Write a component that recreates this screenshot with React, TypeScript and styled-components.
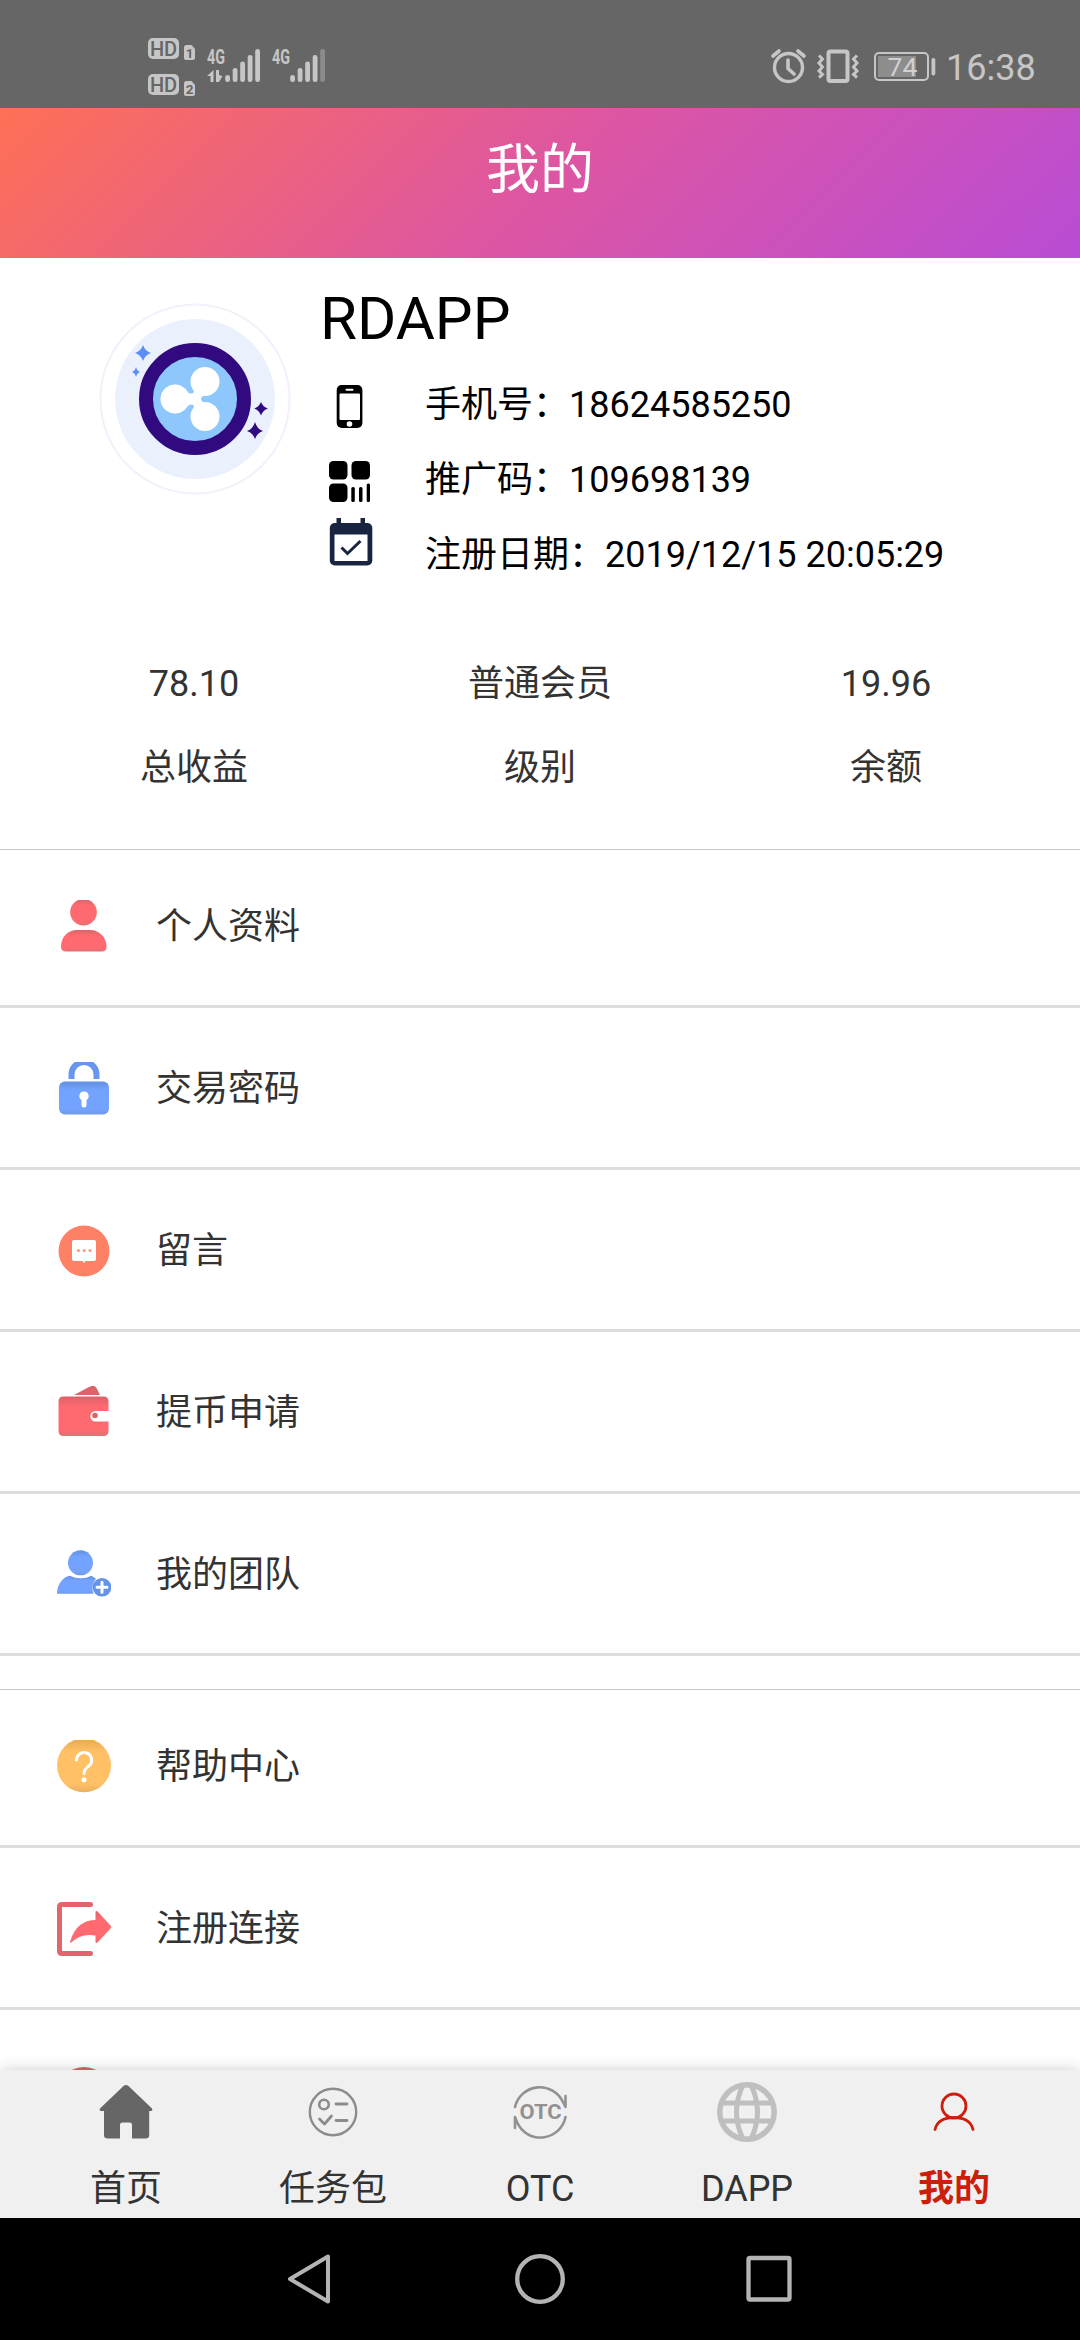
import React from "react";
import styled, { createGlobalStyle } from "styled-components";

const GlobalStyle = createGlobalStyle`
  * { box-sizing: border-box; }
  body {
    margin: 0;
    background: #fff;
    font-family: Roboto, "Noto Sans CJK SC", sans-serif;
    font-size: 36px;
    color: #333;
  }
  svg { display: block; flex: none; }
`;

const Screen = styled.div`
  display: flex;
  flex-direction: column;
  width: 1080px;
  height: 2340px;
  overflow: hidden;
`;

const StatusBar = styled.div`
  display: flex;
  justify-content: space-between;
  flex: none;
  height: 108px;
  padding: 0 44px 0 144px;
  background: #666;
`;

const StatusGroup = styled.div`
  display: flex;
`;

const Clock = styled.span`
  width: 90px;
  line-height: 136px;
  white-space: nowrap;
  color: #c6c6c6;
`;

const Header = styled.header`
  flex: none;
  height: 150px;
  line-height: 126px;
  text-align: center;
  font-size: 54px;
  color: #fff;
  background: linear-gradient(135deg, #fe7055 0%, #dd56a2 50%, #b94cd5 100%);
`;

const Content = styled.main`
  flex: 1;
  min-height: 0;
  overflow: hidden;
`;

const Profile = styled.section`
  display: flex;
  padding: 11px 0 0 98px;
  color: #000;
`;

const AvatarBox = styled.div`
  padding-top: 33px;
  margin-right: 34px;
`;

const Details = styled.div`
  display: flex;
  flex-direction: column;
`;

const Name = styled.h1`
  height: 98px;
  margin: 0 0 0 -6px;
  font-size: 60px;
  font-weight: 400;
  line-height: 100px;
`;

const DetailRow = styled.div`
  display: flex;
  gap: 51px;
  height: 75px;
  line-height: 77px;
  white-space: nowrap;
`;

const Stats = styled.section`
  display: grid;
  grid-template-columns: repeat(3, 1fr);
  padding: 50px 21px 39px;
  text-align: center;
`;

const Stat = styled.div`
  display: flex;
  flex-direction: column;
  line-height: 84px;
`;

const Menu = styled.ul`
  margin: 0 0 33px;
  padding: 0;
  list-style: none;
  border-top: 1px solid #c8c8c8;
`;

const MenuItem = styled.li`
  display: flex;
  gap: 45px;
  height: 162px;
  padding: 54px 57px 0;
  border-bottom: 3px solid #ddd;

  &:first-child {
    height: 158px;
    padding-top: 50px;
  }
`;

const MenuLabel = styled.span`
  line-height: 55px;
`;

const TabBar = styled.nav`
  display: flex;
  flex: none;
  position: relative;
  height: 148px;
  padding: 12px 22.5px 0;
  background: #f0f0f0;
  box-shadow: 0 0 15px -1px rgba(0, 0, 0, 0.22);
`;

const Tab = styled.div<{ $active?: boolean }>`
  display: flex;
  flex: 1;
  flex-direction: column;
  align-items: center;
  gap: 26px;
  line-height: 42px;
  color: ${(p) => (p.$active ? "#cd1e0c" : "#333")};
  font-weight: ${(p) => (p.$active ? 700 : 400)};
`;

const SystemNav = styled.div`
  display: flex;
  flex: none;
  justify-content: space-between;
  height: 122px;
  padding: 0 280px 0 280px;
  background: #000;
`;

const LIGHT = "#c6c6c6";

const HdIndicators = () => (
  <svg width="60" height="108" viewBox="144 0 60 108">
    {[0, 36].map((dy, i) => (
      <g key={dy} transform={`translate(0 ${dy})`}>
        <rect x="148" y="38" width="31" height="21" rx="5" fill={LIGHT} />
        <text x="163.5" y="55.5" textAnchor="middle" fontFamily="Roboto" fontWeight="500" fontSize="20" fill="#666">HD</text>
        <path d="M184 47.500q0-2.500 2.500-2.500h5l3.500 4v9q0 2-2 2h-7q-2 0-2-2z" fill={LIGHT} />
        <text x="189.500" y="57.500" textAnchor="middle" fontFamily="Roboto" fontWeight="700" fontSize="13.500" fill="#666">{i + 1}</text>
      </g>
    ))}
  </svg>
);

const Signal = ({ x, left, width, weak }: { x: number; left: number; width: number; weak?: boolean }) => (
  <svg width={width} height="108" viewBox={`${left} 0 ${width} 108`}>
    <text x={x} y="64" textLength="18" lengthAdjust="spacingAndGlyphs" fontFamily="Roboto" fontWeight="700" fontSize="21" fill={LIGHT}>4G</text>
    {!weak && (
      <path d="M213.500 70v12h-3V76h-3.500zM216 70h3v5l3.500 1-3.500 6h-3z" fill={LIGHT} />
    )}
    {[75, 68, 61.5, 55, 49].map((y, i) => (
      <rect key={y} x={x + 18.200 + i * 7.5} y={y} width="4.800" height={82 - y} rx="2.300" fill={weak && i === 4 ? "#8b8b8b" : LIGHT} />
    ))}
  </svg>
);

const StatusIcons = () => (
  <svg width="182" height="108" viewBox="764 0 182 108" fill="none" stroke={LIGHT} strokeWidth="3.400">
    <circle cx="788.500" cy="67.500" r="14" />
    <path d="M788 60v8.500l6 5.500M773 56l6-5M804 56l-6-5" strokeWidth="3.600" strokeLinecap="round" />
    <rect x="828.500" y="51.500" width="19" height="29.500" rx="2" strokeWidth="4" />
    <path d="M819 55.500l3.500 3.500-3.500 4 3.500 4-3.500 4 3.500 3.500-3.500 3M857 55.500l-3.500 3.500 3.500 4-3.500 4 3.500 4-3.500 3.500 3.500 3" strokeWidth="3" />
    <rect x="875" y="53" width="53" height="27" rx="4" strokeWidth="2" />
    <rect x="878" y="56" width="38" height="21" fill="#8d8d8d" stroke="none" />
    <rect x="931.500" y="58" width="3.800" height="17.500" rx="1.800" fill={LIGHT} stroke="none" />
    <text x="902.500" y="76" textAnchor="middle" fontFamily="Roboto" fontSize="26.500" fill="#d0d0d0" stroke="none">74</text>
  </svg>
);

const Avatar = () => (
  <svg width="194" height="194" viewBox="-97 -97 194 194">
    <circle r="94.500" fill="#fff" stroke="#eff2fb" strokeWidth="2" />
    <circle r="80" fill="#ebf1fc" />
    <circle r="49" fill="#8dc7fb" stroke="#310a80" strokeWidth="14" />
    <g fill="#fff">
      <circle cx="-20" cy="0" r="14.500" />
      <circle cx="10" cy="-17.500" r="14.500" />
      <circle cx="10" cy="17.500" r="14.500" />
      <path d="M-10-9Q-5-4-2-6Q0-7-2-11L13-5Q6-3 6 0Q6 3 13 5L-2 11Q0 7-2 6Q-5 4-10 9z" />
    </g>
    <path d="M-52-54q2 6 8 8q-6 2-8 8q-2-6-8-8q6-2 8-8zM-59-32q1 4 4 5q-3 1-4 5q-1-4-4-5q3-1 4-5z" fill="#5c8df5" />
    <path d="M66 3q2 5 7 6.500q-5 1.500-7 7q-2-5.500-7-7q5-1.500 7-6.500zM60 23q2 7 8 9q-6 2-8 8q-2-6-8-8q6-2 8-9z" fill="#310a80" />
  </svg>
);

const PhoneIcon = () => (
  <svg width="48" height="75" viewBox="326 367 48 75">
    <rect x="336.700" y="385" width="25.700" height="43" rx="5" fill="#000" />
    <rect x="339.500" y="393.500" width="20.500" height="26.500" rx="1" fill="#fff" />
    <rect x="345.500" y="388.800" width="8" height="2" rx="1" fill="#fff" />
    <circle cx="349.500" cy="424" r="2.800" fill="#fff" />
  </svg>
);

const CodeIcon = () => (
  <svg width="48" height="75" viewBox="326 442 48 75">
    <rect x="329" y="461" width="18.500" height="18.500" rx="4.500" />
    <rect x="351.500" y="461" width="18.500" height="18.500" rx="4.500" />
    <rect x="329" y="483.500" width="18.500" height="18.500" rx="4.500" />
    <rect x="351.300" y="487" width="3.500" height="15" rx="1.500" />
    <rect x="359" y="487" width="3.500" height="15" rx="1.500" />
    <rect x="366.700" y="483.500" width="3.300" height="18.500" rx="1.500" />
  </svg>
);

const CalendarIcon = () => (
  <svg width="48" height="75" viewBox="326 517 48 75">
    <rect x="329.800" y="523" width="42.500" height="42.500" rx="5" fill="#182440" />
    <path d="M336.500 518h4.500v6h-4.500zM360.500 518h4.500v6h-4.500z" fill="#182440" />
    <rect x="334.500" y="534.500" width="33" height="26.500" fill="#fff" />
    <path d="M341.500 547.500l6 6L360.500 541" fill="none" stroke="#182440" strokeWidth="3" />
  </svg>
);

const details = [
  { icon: <PhoneIcon />, text: "手机号：18624585250" },
  { icon: <CodeIcon />, text: "推广码：109698139" },
  { icon: <CalendarIcon />, text: "注册日期：2019/12/15 20:05:29" },
];

const stats = [
  ["78.10", "总收益"],
  ["普通会员", "级别"],
  ["19.96", "余额"],
];

const MenuSvg = ({ children }: { children: React.ReactNode }) => (
  <svg width="54" height="54" viewBox="0 0 54 54">{children}</svg>
);

const GradientDefs = styled.svg`
  position: absolute;
`;

const Defs = () => (
  <GradientDefs width="0" height="0">
    <defs>
      {[
        ["red", "#ff6a70", "#da6268"],
        ["blue", "#73a3ff", "#608ee0"],
        ["gold", "#ffc066", "#e5a850"],
      ].map(([id, main, edge]) => (
        <linearGradient key={id} id={id} x1="0" y1="0" x2="0" y2="1">
          <stop offset="0" stopColor={edge} />
          <stop offset="0.250" stopColor={main} />
          <stop offset="0.850" stopColor={main} />
          <stop offset="1" stopColor={edge} stopOpacity="0.900" />
        </linearGradient>
      ))}
    </defs>
  </GradientDefs>
);

const UserIcon = () => (
  <MenuSvg>
    <circle cx="26.500" cy="12.200" r="13.300" fill="url(#red)" />
    <path d="M4 46.500C4 37 11 30 20 30h13c9 0 16.500 7 16.500 16.500Q49.500 51.500 45 51.500H9Q4 51.500 4 46.500z" fill="url(#red)" />
  </MenuSvg>
);

const LockIcon = () => (
  <MenuSvg>
    <path d="M14.500 17V12.500a12.500 12.500 0 0 1 25 0V17" fill="none" stroke="#6896ee" strokeWidth="6" />
    <rect x="2" y="19.500" width="50" height="33" rx="6" fill="url(#blue)" />
    <path d="M27 29.500a4.600 4.600 0 0 0-2.500 8.500v5a2.500 2.500 0 0 0 5 0v-5a4.600 4.600 0 0 0-2.500-8.500z" fill="#fff" />
  </MenuSvg>
);

const MessageIcon = () => (
  <MenuSvg>
    <circle cx="27" cy="27" r="25.500" fill="#ff8165" />
    <path d="M17 16h20q2 0 2 2v17q0 2-2 2h-8.500q-1 2-1.500 2t-1.500-2H17q-2 0-2-2V18q0-2 2-2z" fill="#fff" />
    <g fill="#ff9a84">
      <circle cx="21.500" cy="26.500" r="1.600" />
      <circle cx="27.200" cy="26.500" r="1.600" />
      <circle cx="33" cy="26.500" r="1.600" />
    </g>
  </MenuSvg>
);

const WalletIcon = () => (
  <MenuSvg>
    <path d="M17 9L32 1q6-3 8 2l3 6z" fill="#dc6369" />
    <path d="M6.500 10.500h40q5 0 5 5v9.500H38.500a5.200 5.200 0 0 0 0 10.400H51.500V45q0 5-5 5h-40q-5 0-5-5V15.500q0-5 5-5z" fill="url(#red)" />
    <circle cx="38" cy="29.500" r="2.800" fill="#de6369" />
  </MenuSvg>
);

const TeamIcon = () => (
  <MenuSvg>
    <g transform="translate(0 -1.700)">
      <circle cx="23.500" cy="16.500" r="12.500" fill="url(#blue)" />
      <path d="M0 47.500C0 37 7 30.500 12.500 29.500Q24 34.500 34.500 29.500L39 32.500Q33.500 39.500 36.500 47.500z" fill="url(#blue)" />
      <circle cx="45" cy="41" r="9.300" fill="#6593ea" />
      <path d="M45 36v10M40 41h10" stroke="#fff" strokeWidth="3" strokeLinecap="round" />
    </g>
  </MenuSvg>
);

const HelpIcon = () => (
  <MenuSvg>
    <circle cx="27" cy="25.300" r="27" fill="url(#gold)" />
    <path d="M19.500 20a7.600 7.600 0 1 1 13 5.500q-5.500 3.500-5.500 8" fill="none" stroke="#fff" strokeWidth="3" strokeLinecap="round" />
    <circle cx="27" cy="39.700" r="2.500" fill="#fff" />
  </MenuSvg>
);

const ShareIcon = () => (
  <MenuSvg>
    <path d="M33.500 2.500H5q-2.500 0-2.500 2.500v44q0 2.500 2.500 2.500h28.500" fill="none" stroke="#e2656d" strokeWidth="5" strokeLinecap="round" />
    <path d="M38.500 10Q39 8 41 10l12.500 13.500q1 1.500 0 3L41 40q-2 2-2.500 0v-6.500Q24 31 15 40q-3 2-1.500-1.500Q20 18 38.500 18z" fill="url(#red)" />
  </MenuSvg>
);

const RoundIcon = () => (
  <MenuSvg>
    <circle cx="27" cy="29" r="26" fill="#d9696a" />
  </MenuSvg>
);

const menus = [
  [
    { icon: <UserIcon />, label: "个人资料" },
    { icon: <LockIcon />, label: "交易密码" },
    { icon: <MessageIcon />, label: "留言" },
    { icon: <WalletIcon />, label: "提币申请" },
    { icon: <TeamIcon />, label: "我的团队" },
  ],
  [
    { icon: <HelpIcon />, label: "帮助中心" },
    { icon: <ShareIcon />, label: "注册连接" },
    { icon: <RoundIcon />, label: "" },
  ],
];

const TabSvg = ({ children }: { children: React.ReactNode }) => (
  <svg width="60" height="60" viewBox="-30 -30 60 60" fill="none" strokeLinecap="round" strokeLinejoin="round">
    {children}
  </svg>
);

const HomeTabIcon = () => (
  <TabSvg>
    <path d="M-2.500-26Q0-28 2.500-26L26-3.500Q27-1.500 25-1H23.200V23q0 3.500-3.500 3.500H6V13q0-2.500-2.500-2.500h-7Q-6 10.500-6 13V26.500H-18.500q-3.500 0-3.500-3.500V-1H-25Q-27-1.500-26-3.500z" fill="#666" />
  </TabSvg>
);

const TaskTabIcon = () => (
  <TabSvg>
    <g stroke="#8c8c8c" strokeWidth="2.400">
      <circle r="23.200" />
      <circle cx="-9" cy="-7.500" r="4.800" strokeWidth="2.600" />
      <path d="M3-8h11M3 8.500h11M-13.500 7l5 5 7-8" strokeWidth="2.800" />
    </g>
  </TabSvg>
);

const OtcTabIcon = () => (
  <TabSvg>
    <path d="M-25-5A25.500 25.500 0 0 1 23-10L25.500-5V-16M25.500 5A25.500 25.500 0 0 1-23 10L-25 5V16" stroke="#919191" strokeWidth="2.600" />
    <text x="0.500" y="7.300" textAnchor="middle" textLength="42" lengthAdjust="spacingAndGlyphs" fontFamily="Roboto" fontSize="21" fontWeight="700" fill="#919191">OTC</text>
  </TabSvg>
);

const GlobeTabIcon = () => (
  <TabSvg>
    <g stroke="#bfbfbf" strokeWidth="5" strokeLinecap="butt">
      <circle r="27.200" strokeWidth="5.500" />
      <path d="M-25-9H25M-25 9H25M-4-27Q-17 0-4 27M4-27Q17 0 4 27" />
    </g>
  </TabSvg>
);

const MeTabIcon = () => (
  <TabSvg>
    <g stroke="#cd1e0c" strokeWidth="2.800">
      <circle cy="-6" r="12" />
      <path d="M-19 17.500C-17 9-9 5.700 0 5.700S17 9 19 17.500" />
    </g>
  </TabSvg>
);

const tabs = [
  { icon: <HomeTabIcon />, label: "首页" },
  { icon: <TaskTabIcon />, label: "任务包" },
  { icon: <OtcTabIcon />, label: "OTC" },
  { icon: <GlobeTabIcon />, label: "DAPP" },
  { icon: <MeTabIcon />, label: "我的", active: true },
];

export default function App() {
  return (
    <Screen>
      <GlobalStyle />
      <Defs />
      <StatusBar>
        <StatusGroup>
          <HdIndicators />
          <Signal x={207} left={204} width={64} />
          <Signal x={272} left={268} width={64} weak />
        </StatusGroup>
        <StatusGroup>
          <StatusIcons />
          <Clock>16:38</Clock>
        </StatusGroup>
      </StatusBar>
      <Header>我的</Header>
      <Content>
        <Profile>
          <AvatarBox>
            <Avatar />
          </AvatarBox>
          <Details>
            <Name>RDAPP</Name>
            {details.map((d) => (
              <DetailRow key={d.text}>
                {d.icon}
                <span>{d.text}</span>
              </DetailRow>
            ))}
          </Details>
        </Profile>
        <Stats>
          {stats.map(([value, label]) => (
            <Stat key={label}>
              <span>{value}</span>
              <span>{label}</span>
            </Stat>
          ))}
        </Stats>
        {menus.map((items, i) => (
          <Menu key={i}>
            {items.map((item, j) => (
              <MenuItem key={j}>
                {item.icon}
                <MenuLabel>{item.label}</MenuLabel>
              </MenuItem>
            ))}
          </Menu>
        ))}
      </Content>
      <TabBar>
        {tabs.map((t) => (
          <Tab key={t.label} $active={t.active}>
            {t.icon}
            <span>{t.label}</span>
          </Tab>
        ))}
      </TabBar>
      <SystemNav>
        <svg width="60" height="122" viewBox="280 2218 60 122" fill="none" stroke="#b4b4b4" strokeWidth="4" strokeLinejoin="round">
          <path d="M290 2279L328 2256.500V2301.500z" />
        </svg>
        <svg width="60" height="122" viewBox="510 2218 60 122" fill="none" stroke="#b4b4b4" strokeWidth="4.300">
          <circle cx="540" cy="2279" r="22.800" />
        </svg>
        <svg width="60" height="122" viewBox="740 2218 60 122" fill="none" stroke="#b4b4b4" strokeWidth="4.300">
          <rect x="748.500" y="2258" width="41" height="41.500" rx="1.500" />
        </svg>
      </SystemNav>
    </Screen>
  );
}
